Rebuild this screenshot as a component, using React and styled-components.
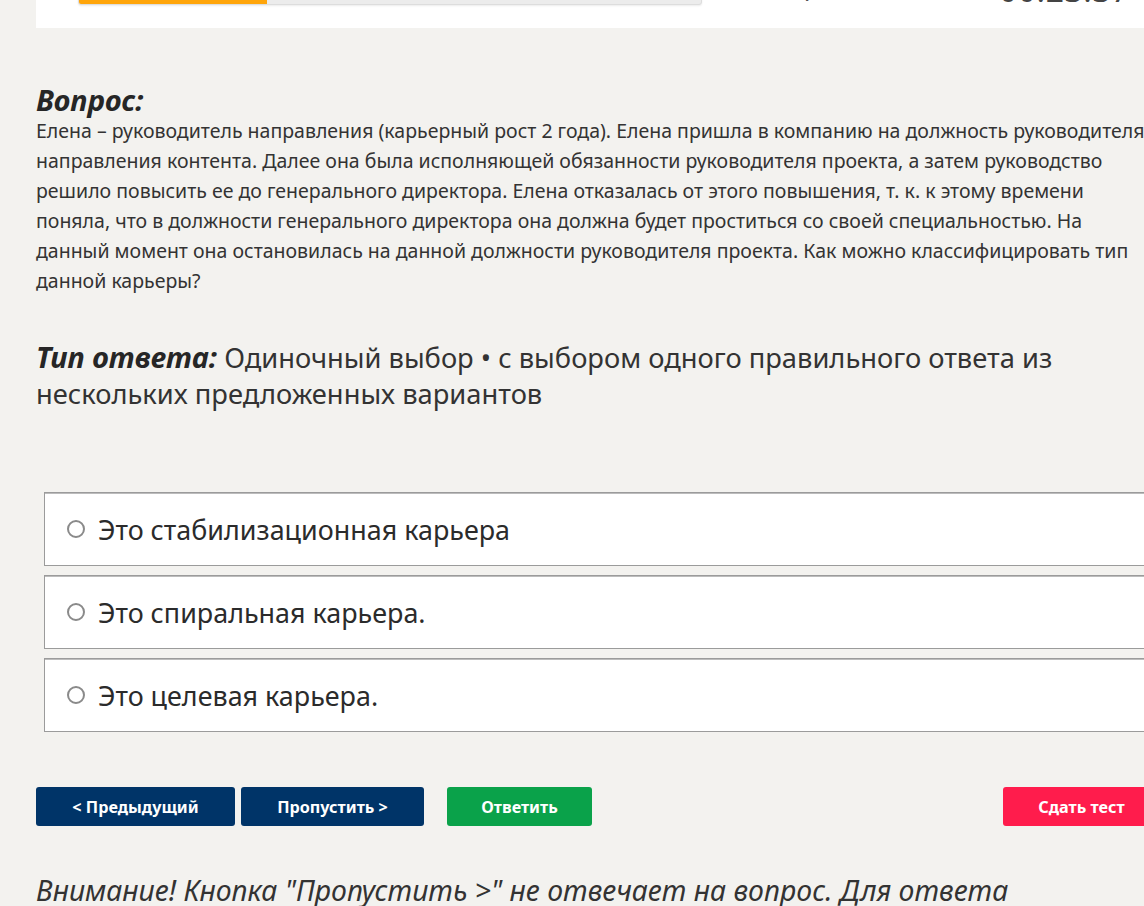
import React from 'react'
import styled, { createGlobalStyle } from 'styled-components'

const GlobalStyle = createGlobalStyle`
  html, body {
    margin: 0;
    padding: 0;
    background: #f3f2ef;
    overflow: hidden;
  }
  body {
    font-family: "Noto Sans", "Open Sans", sans-serif;
    color: #333;
  }
`

const questionLines = [
  'Елена – руководитель направления (карьерный рост 2 года). Елена пришла в компанию на должность руководителя',
  'направления контента. Далее она была исполняющей обязанности руководителя проекта, а затем руководство',
  'решило повысить ее до генерального директора. Елена отказалась от этого повышения, т. к. к этому времени',
  'поняла, что в должности генерального директора она должна будет проститься со своей специальностью. На',
  'данный момент она остановилась на данной должности руководителя проекта. Как можно классифицировать тип',
  'данной карьеры?',
]

const answers = [
  'Это стабилизационная карьера',
  'Это спиральная карьера.',
  'Это целевая карьера.',
]

export default function App() {
  return (
    <>
      <GlobalStyle />
      <Page>
        {/* top card, scrolled mostly out of view */}
        <HeaderCard>
          <Progress>
            <ProgressFill style={{ width: `${(188 / 622) * 100}%` }} />
          </Progress>
          <Counter>1</Counter>
          <Timer>00:23:37</Timer>
        </HeaderCard>

        <Question>
          <Heading>Вопрос:</Heading>
          <QuestionText>
            {questionLines.map((line) => (
              <Line key={line}>{line}</Line>
            ))}
          </QuestionText>
        </Question>

        <AnswerType>
          <Heading as="span">Тип ответа:</Heading> Одиночный выбор • с выбором одного правильного ответа из
          <br />
          нескольких предложенных вариантов
        </AnswerType>

        <AnswerList>
          {answers.map((a) => (
            <AnswerRow key={a}>
              <Radio type="radio" name="answer" />
              <span>{a}</span>
            </AnswerRow>
          ))}
        </AnswerList>

        <ButtonBar>
          <Button $color="#003468" $width="199px">&lt; Предыдущий</Button>
          <Button $color="#003468" $width="183px">Пропустить &gt;</Button>
          <Button $color="#0aa24a" $width="145px" $gap="17px">Ответить</Button>
          <Spacer />
          <Button $color="#ff1c4c" $width="157px">Сдать тест</Button>
        </ButtonBar>

        <Warning>
          Внимание! Кнопка "Пропустить &gt;" не отвечает на вопрос. Для ответа
          <br />
          нажмите кнопку "Ответить".
        </Warning>
      </Page>
    </>
  )
}

const Page = styled.div`
  width: 1124px;
  margin-left: 36px;
`

const HeaderCard = styled.div`
  height: 28px;
  background: #fff;
  display: flex;
  align-items: flex-start;
  padding-left: 42px;
  overflow: hidden;
`

const Progress = styled.div`
  width: 622px;
  height: 20px;
  margin-top: -17px;
  background: #ececec;
  border: 1px solid #ddd;
  border-radius: 3px;
  overflow: hidden;
  box-shadow: 0 1px 2px rgba(0, 0, 0, 0.08);
`

const ProgressFill = styled.div`
  height: 100%;
  background: #ffa50a;
`

const Counter = styled.span`
  margin: -22px 0 0 97px;
  font-size: 26px;
  line-height: 26px;
  color: #555;
`

const Timer = styled.span`
  margin: -23px 0 0 auto;
  padding-right: 30px;
  font-size: 32px;
  line-height: 26px;
  letter-spacing: 0.5px;
  color: #444;
`

const Question = styled.section`
  margin-top: 56px;
`

const Heading = styled.h2`
  margin: 0;
  font-size: 29px;
  line-height: 32px;
  font-weight: 700;
  font-style: italic;
  color: #262626;
`

const QuestionText = styled.p`
  margin: 0;
  font-size: 19.5px;
  line-height: 30px;
  color: #333;
`

const Line = styled.span`
  display: block;
  white-space: nowrap;
`

const AnswerType = styled.p`
  margin: 44px 0 0;
  font-size: 27.3px;
  line-height: 36px;
  color: #333;
`

const AnswerList = styled.div`
  margin: 80px 0 0 8px;
  display: flex;
  flex-direction: column;
  gap: 9px;
`

const AnswerRow = styled.label`
  height: 74px;
  box-sizing: border-box;
  display: flex;
  align-items: center;
  gap: 13px;
  padding-left: 22px;
  background: #fff;
  border: 1px solid #9b9b9b;
  box-shadow: inset 0 1px 0 #bcbcbc;
  font-size: 26.9px;
  color: #2b2b2b;
  cursor: pointer;
`

const Radio = styled.input`
  appearance: none;
  width: 18px;
  height: 18px;
  margin: 0;
  border: 2px solid #8a8a8a;
  border-radius: 50%;
  background: #fff;
  &:checked {
    background: radial-gradient(#0a64c8 45%, #fff 50%);
  }
`

const ButtonBar = styled.div`
  margin-top: 55px;
  display: flex;
  align-items: center;
  gap: 6px;
`

const Button = styled.button`
  width: ${(p) => p.$width};
  height: 39px;
  margin-left: ${(p) => p.$gap || 0};
  border: none;
  border-radius: 3px;
  background: ${(p) => p.$color};
  color: #fff;
  font-family: "Noto Sans", "Open Sans", sans-serif;
  font-size: 16.2px;
  font-weight: 700;
  cursor: pointer;
`

const Spacer = styled.div`
  flex: 1;
`

const Warning = styled.p`
  margin: 46px 0 0;
  font-size: 28.4px;
  line-height: 36px;
  font-style: italic;
  color: #333;
`
